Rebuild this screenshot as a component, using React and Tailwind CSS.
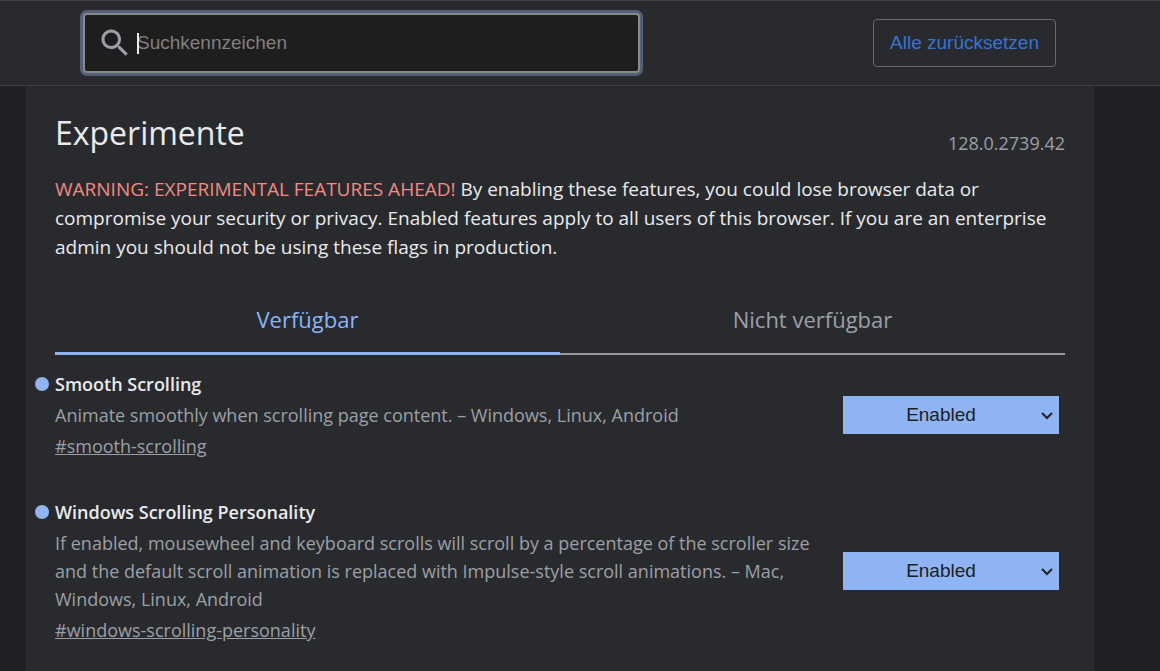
import React from "react";

const tabs = [
  { id: "available", label: "Verfügbar", active: true },
  { id: "unavailable", label: "Nicht verfügbar", active: false },
];

const flags = [
  {
    id: "smooth-scrolling",
    title: "Smooth Scrolling",
    description:
      "Animate smoothly when scrolling page content. – Windows, Linux, Android",
  },
  {
    id: "windows-scrolling-personality",
    title: "Windows Scrolling Personality",
    description:
      "If enabled, mousewheel and keyboard scrolls will scroll by a percentage of the scroller size and the default scroll animation is replaced with Impulse-style scroll animations. – Mac, Windows, Linux, Android",
  },
];

function SearchBar() {
  return (
    <label
      htmlFor="search"
      className="relative flex h-[60px] max-w-[557px] flex-1 cursor-text items-center rounded-sm border-2 border-[#8a8a8a] bg-[#1e1e1f] pl-3 ring-3 ring-[#546078]"
    >
      <svg viewBox="0 0 24 24" className="h-9 w-9 shrink-0 fill-[#9aa0a6]" aria-hidden="true">
        <path d="M15.5 14h-.79l-.28-.27C15.41 12.59 16 11.11 16 9.5 16 5.91 13.09 3 9.5 3S3 5.91 3 9.5 5.91 16 9.5 16c1.61 0 3.09-.59 4.23-1.57l.27.28v.79l5 4.99L20.49 19l-4.99-5zm-6 0C7.01 14 5 11.99 5 9.5S7.01 5 9.5 5 14 7.01 14 9.5 11.99 14 9.5 14z" />
      </svg>
      <span className="absolute left-[52px] h-[21px] w-0.5 bg-[#e8eaed]" />
      <input
        id="search"
        type="text"
        placeholder="Suchkennzeichen"
        aria-label="Suchkennzeichen"
        className="ml-1 min-w-0 flex-1 bg-transparent text-[19px] text-[#e8eaed] outline-none placeholder:text-[#80807f]"
      />
    </label>
  );
}

function Tab({ label, active }) {
  return (
    <button
      type="button"
      role="tab"
      aria-selected={active}
      className={
        active
          ? "h-[68px] flex-1 border-b-3 border-[#8fb4f3] text-[#8ab4f8]"
          : "h-[68px] flex-1 border-b-2 border-[#9a9a9c] pb-px text-[#9aa0a6]"
      }
    >
      {label}
    </button>
  );
}

function Experiment({ id, title, description }) {
  return (
    <section id={id} className="flex items-center justify-between gap-6">
      <div className="min-w-0 flex-1 text-[18px] leading-7 text-[#9aa0a6]">
        <h2 className="-ml-5 flex items-center gap-1.5 font-semibold text-[#e8eaed]">
          <span className="size-3.5 shrink-0 rounded-full bg-[#8fb4f3]" />
          {title}
        </h2>
        <p className="mt-[3px]">{description}</p>
        <a href={"#" + id} className="mt-[3px] block w-fit underline">
          #{id}
        </a>
      </div>
      <div className="relative mr-1.5 w-[216px] shrink-0">
        <select
          aria-label={title}
          defaultValue="Enabled"
          className="block h-[38px] w-full appearance-none bg-[#8fb4f3] pr-5 text-center font-['Liberation_Sans',Arial,sans-serif] text-[19px] text-[#202124] [text-align-last:center]"
        >
          <option>Default</option>
          <option>Enabled</option>
          <option>Disabled</option>
        </select>
        <svg
          viewBox="0 0 12 8"
          className="pointer-events-none absolute top-4 right-1.5 h-2 w-3"
          fill="none"
          stroke="#202124"
          strokeWidth="2"
          aria-hidden="true"
        >
          <path d="M1 1l5 5 5-5" />
        </svg>
      </div>
    </section>
  );
}

export default function App() {
  return (
    <div className="flex min-h-screen flex-col bg-[#202124] font-['Open_Sans','Segoe_UI',sans-serif] text-[#e8eaed]">
      <header className="flex items-center justify-between gap-6 border-y border-[#3f4043] bg-[#292a2d] pt-3 pr-[104px] pb-3 pl-[83px] font-['Liberation_Sans',Arial,sans-serif]">
        <SearchBar />
        <button
          type="button"
          className="h-12 rounded border border-[#68696b] px-4 text-[19px] text-[#3574d4]"
        >
          Alle zurücksetzen
        </button>
      </header>

      <main className="mr-[66px] ml-[26px] flex-1 bg-[#292a2d] px-[29px] pt-[23px]">
        <div className="flex items-end justify-between">
          <h1 className="text-[32px] leading-[48px]">Experimente</h1>
          <span className="text-[18px] leading-7 text-[#9aa0a6]">128.0.2739.42</span>
        </div>

        <p className="mt-[18px] text-[19px] leading-[29px]">
          <span className="text-[#f28b82]">WARNING: EXPERIMENTAL FEATURES AHEAD!</span>{" "}
          By enabling these features, you could lose browser data or compromise
          your security or privacy. Enabled features apply to all users of this
          browser. If you are an enterprise admin you should not be using these
          flags in production.
        </p>

        <div role="tablist" className="mt-[25px] flex items-end text-[22px]">
          {tabs.map((tab) => (
            <Tab key={tab.id} label={tab.label} active={tab.active} />
          ))}
        </div>

        <div className="mt-[15px] flex flex-col gap-[38px]">
          {flags.map((flag) => (
            <Experiment key={flag.id} {...flag} />
          ))}
        </div>
      </main>
    </div>
  );
}
